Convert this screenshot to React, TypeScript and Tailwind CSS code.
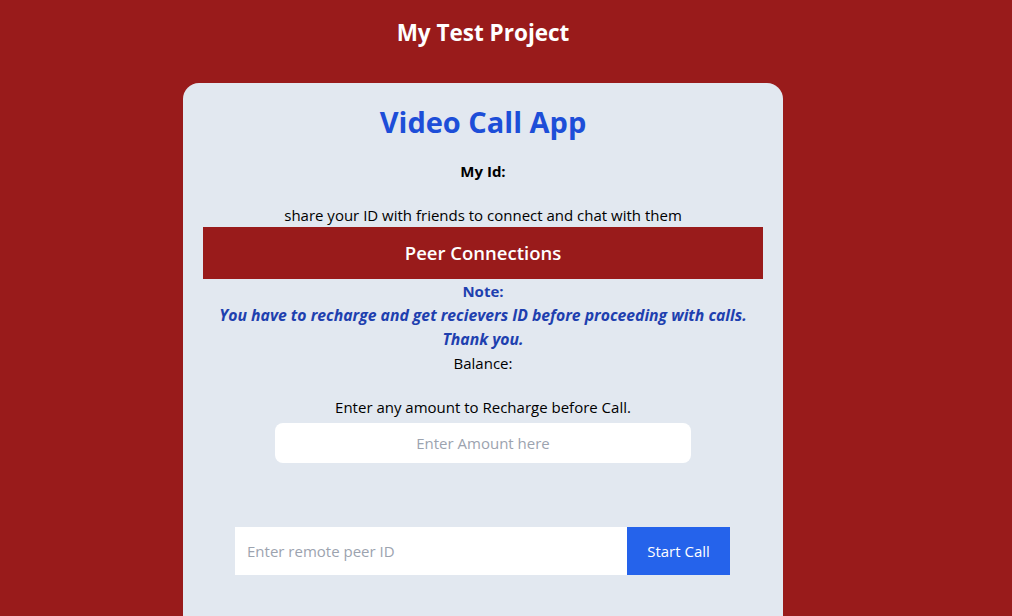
import React from "react";

export default function App() {
  const font = { fontFamily: '"Open Sans", "Noto Sans", sans-serif' };
  return (
    <div className="min-h-[616px] bg-[#991b1b] flex flex-col items-center pr-[46px] overflow-hidden" style={font}>
      <h1 className="text-white font-bold text-[22.5px] leading-8 pt-[17px]">My Test Project</h1>
      <div className="mt-[34px] w-[600px] bg-[#e2e8f0] rounded-2xl px-5 pt-[21px] pb-16 flex flex-col items-center text-center text-black">
        <h2 className="text-[#1d4ed8] font-bold text-[29px] leading-9">Video Call App</h2>
        <p className="mt-[19px] font-bold text-[15px] leading-6">My Id:</p>
        <p className="mt-5 text-[15px] leading-6">share your ID with friends to connect and chat with them</p>
        <div className="w-full h-[52px] bg-[#991b1b] text-white text-[18.5px] font-semibold flex items-center justify-center">
          Peer Connections
        </div>
        <p className="font-bold text-[15px] leading-6 text-[#1e40af]">Note:</p>
        <p className="font-bold italic text-[15.75px] leading-6 text-[#1e40af]">
          You have to recharge and get recievers ID before proceeding with calls.
          <br />
          Thank you.
        </p>
        <p className="text-[15px] leading-6">Balance:</p>
        <p className="mt-5 text-[15px] leading-6">Enter any amount to Recharge before Call.</p>
        <input
          className="mt-1 w-[416px] h-10 bg-white rounded-lg text-center text-[15px] placeholder:text-[#9ca3af] outline-none"
          placeholder="Enter Amount here"
        />
        <div className="mt-16 self-start ml-8 flex w-[495px] h-12">
          <input
            className="flex-1 bg-white px-3 text-[15px] placeholder:text-[#9ca3af] outline-none"
            placeholder="Enter remote peer ID"
          />
          <button className="w-[103px] bg-[#2563eb] text-white text-[15px]">Start Call</button>
        </div>
      </div>
    </div>
  );
}
